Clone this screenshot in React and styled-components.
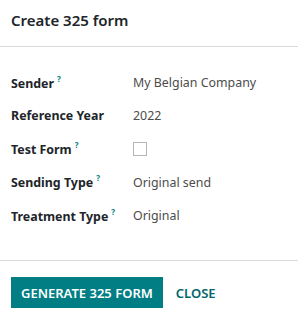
import React from 'react';
import styled, { createGlobalStyle } from 'styled-components';

const GlobalStyle = createGlobalStyle`
    body {
        margin: 0;
        background: #fff;
        font-family: "Noto Sans", "Open Sans", sans-serif;
        color: #212529;
    }
`;

const fields = [
    { label: 'Sender', help: true, value: 'My Belgian Company' },
    { label: 'Reference Year', help: false, value: '2022' },
    { label: 'Test Form', help: true, checkbox: true },
    { label: 'Sending Type', help: true, value: 'Original send' },
    { label: 'Treatment Type', help: true, value: 'Original' },
];

const App = () => {
    return (
        <>
            <GlobalStyle />
            <Dialog>
                <Header>
                    <Title>Create 325 form</Title>
                </Header>

                <Body>
                    {fields.map((f) => (
                        <Row key={f.label}>
                            <Label>
                                {f.label}
                                {f.help && <Help>?</Help>}
                            </Label>
                            {f.checkbox ? <Checkbox /> : <Value>{f.value}</Value>}
                        </Row>
                    ))}
                </Body>

                <Footer>
                    <PrimaryButton>Generate 325 form</PrimaryButton>
                    <LinkButton>Close</LinkButton>
                </Footer>
            </Dialog>
        </>
    );
};

const Dialog = styled.div`
    width: 298px;
    display: flex;
    flex-direction: column;
    background: #fff;
`;

const Header = styled.div`
    flex-shrink: 0;
    height: 47px;
    display: flex;
    align-items: center;
    padding: 0 11px 6px;
    border-bottom: 1px solid #d8dadd;
    box-sizing: border-box;
`;

const Title = styled.h4`
    margin: 0;
    font-size: 15px;
    font-weight: 600;
    color: #212529;
`;

const Body = styled.div`
    padding: 19px 11px 28px;
    border-bottom: 1px solid #d8dadd;
`;

const Row = styled.div`
    display: grid;
    grid-template-columns: 122px 1fr;
    align-items: center;
    height: 33.3px;
`;

const Label = styled.div`
    font-size: 12.4px;
    font-weight: 700;
    color: #212529;
`;

const Help = styled.sup`
    position: relative;
    top: -1px;
    margin-left: 3px;
    font-size: 8px;
    font-weight: 700;
    color: #017e84;
`;

const Value = styled.div`
    font-size: 12.4px;
    color: #4c4c4c;
`;

const Checkbox = styled.span`
    display: block;
    width: 12px;
    height: 12px;
    border: 1px solid #b5b5b5;
    background: #fff;
`;

const Footer = styled.div`
    display: flex;
    align-items: center;
    gap: 2px;
    padding: 16px 11px 9px;
`;

const PrimaryButton = styled.button`
    height: 31px;
    padding: 0 10px;
    border: none;
    border-radius: 0;
    background: #017e84;
    color: #fff;
    font-family: inherit;
    font-size: 13px;
    font-weight: 600;
    text-transform: uppercase;
`;

const LinkButton = styled.button`
    height: 31px;
    padding: 0 11px;
    border: none;
    background: none;
    color: #01666b;
    font-family: inherit;
    font-size: 13px;
    font-weight: 600;
    text-transform: uppercase;
`;

export default App;
